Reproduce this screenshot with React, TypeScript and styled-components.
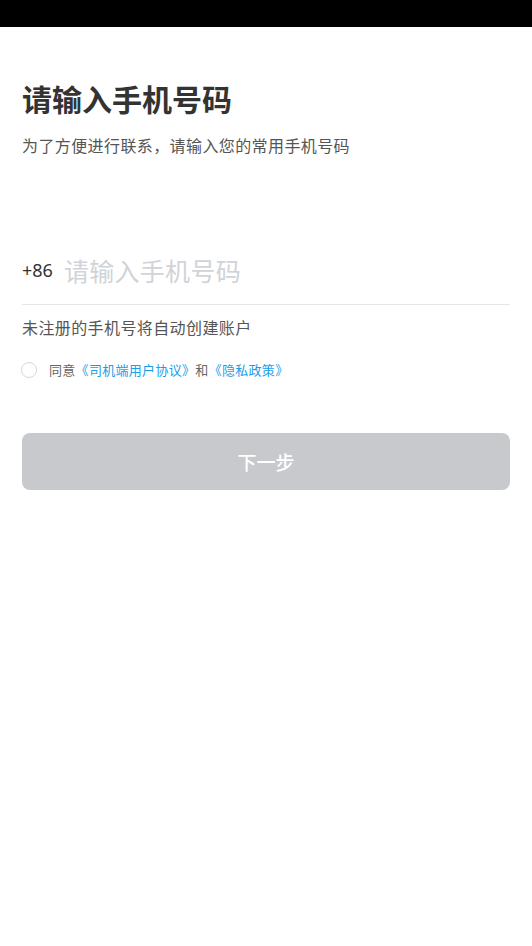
import React, { useState } from "react";
import styled, { createGlobalStyle } from "styled-components";

const Global = createGlobalStyle`
  html, body { margin: 0; padding: 0; background: #fff; }
  body { font-family: "Noto Sans CJK SC", "Noto Sans", sans-serif; }
  * { box-sizing: border-box; }
`;

const Page = styled.div`
  width: 532px;
  min-height: 946px;
  background: #fff;
  display: flex;
  flex-direction: column;
`;

const StatusBar = styled.div`
  height: 27px;
  background: #000;
`;

const Content = styled.main`
  display: flex;
  flex-direction: column;
  padding: 0 22px;
`;

const Title = styled.h1`
  margin: 50px 0 0;
  font-size: 30px;
  line-height: 42px;
  font-weight: 700;
  color: #333;
`;

const Subtitle = styled.p`
  margin: 14px 0 0;
  font-size: 16px;
  line-height: 24px;
  letter-spacing: 0.4px;
  color: #555;
`;

const PhoneRow = styled.label`
  margin-top: 80px;
  display: flex;
  align-items: center;
  gap: 11px;
  height: 68px;
  padding-bottom: 2px;
  border-bottom: 1px solid #e5e6e8;
`;

const Prefix = styled.span`
  font-family: "Noto Sans", "Noto Sans CJK SC", sans-serif;
  font-size: 18px;
  color: #333;
`;

const PhoneInput = styled.input`
  flex: 1;
  border: none;
  outline: none;
  padding: 0;
  background: transparent;
  font-family: "Noto Sans CJK SC", sans-serif;
  font-size: 25px;
  letter-spacing: 0.3px;
  color: #333;
  &::placeholder { color: #d0d3d8; }
`;

const Notice = styled.p`
  margin: 10px 0 0;
  font-size: 16px;
  line-height: 24px;
  letter-spacing: 0.4px;
  color: #555;
`;

const Agreement = styled.div`
  margin-top: 21px;
  display: flex;
  align-items: center;
  gap: 12px;
  font-size: 13px;
  line-height: 20px;
  letter-spacing: 0.3px;
  color: #666;
`;

const Radio = styled.button<{ $checked: boolean }>`
  width: 16px;
  height: 16px;
  padding: 0;
  margin-left: -1px;
  border-radius: 50%;
  border: 1px solid ${(p) => (p.$checked ? "#1a9ee8" : "#d8d8d8")};
  background: ${(p) => (p.$checked ? "#1a9ee8" : "#fff")};
  cursor: pointer;
`;

const Link = styled.a`
  color: #1a9ee8;
  text-decoration: none;
`;

const NextButton = styled.button`
  margin-top: 53px;
  height: 57px;
  width: 100%;
  border: none;
  border-radius: 8px;
  background: #c8c9cc;
  color: #fff;
  font-family: "Noto Sans CJK SC", sans-serif;
  font-size: 19px;
  font-weight: 500;
`;

export default function App() {
  const [agreed, setAgreed] = useState(false);
  return (
    <Page>
      <Global />
      <StatusBar />
      <Content>
        <Title>请输入手机号码</Title>
        <Subtitle>为了方便进行联系，请输入您的常用手机号码</Subtitle>
        <PhoneRow>
          <Prefix>+86</Prefix>
          <PhoneInput placeholder="请输入手机号码" />
        </PhoneRow>
        <Notice>未注册的手机号将自动创建账户</Notice>
        <Agreement>
          <Radio $checked={agreed} onClick={() => setAgreed(!agreed)} aria-label="同意" />
          <span>
            同意<Link>《司机端用户协议》</Link>和<Link>《隐私政策》</Link>
          </span>
        </Agreement>
        <NextButton>下一步</NextButton>
      </Content>
    </Page>
  );
}
